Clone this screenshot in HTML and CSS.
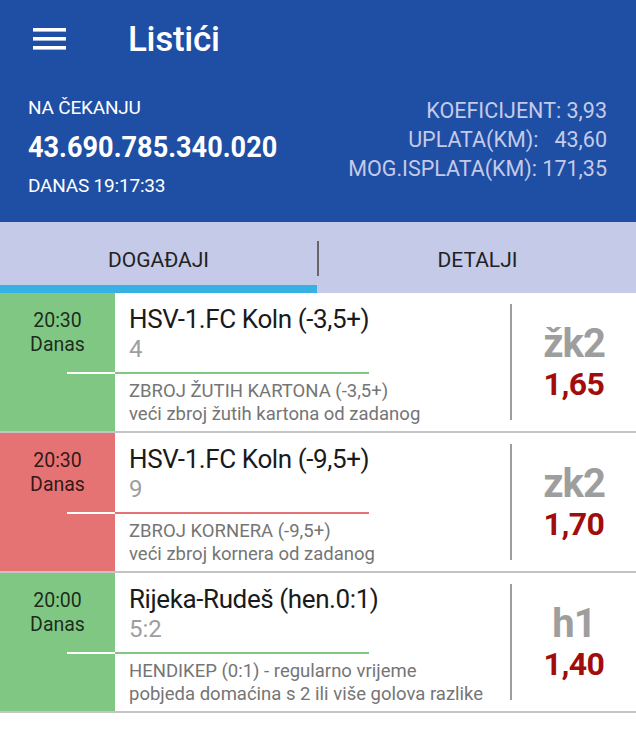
FILE: index.html
```html
<!DOCTYPE html>
<html lang="hr">
  <head>
    <meta charset="UTF-8" />
    <meta name="viewport" content="width=device-width, initial-scale=1.0" />
    <title>Listići</title>
    <link rel="stylesheet" href="styles.css">
  </head>
  <body>
    <header class="topbar">
      <div class="appbar">
        <svg class="menu-icon" width="33" height="22" viewBox="0 0 33 22">
          <rect x="0" y="0" width="33" height="3.6" fill="#fff" />
          <rect x="0" y="9" width="33" height="3.6" fill="#fff" />
          <rect x="0" y="18" width="33" height="3.6" fill="#fff" />
        </svg>
        <h1>Listići</h1>
      </div>
      <div class="summary">
        <div class="summary-left">
          <div class="status">NA ČEKANJU</div>
          <div class="ticket-no"><span>43.690.785.340.020</span></div>
          <div class="ticket-date">DANAS 19:17:33</div>
        </div>
        <div class="summary-right">
          <div class="summary-line">KOEFICIJENT: 3,93</div>
          <div class="summary-line">UPLATA(KM):   43,60</div>
          <div class="summary-line">MOG.ISPLATA(KM): 171,35</div>
        </div>
      </div>
    </header>

    <nav class="tabs">
      <div class="tab active">DOGAĐAJI</div>
      <span class="tab-divider"></span>
      <div class="tab">DETALJI</div>
    </nav>

    <ul class="events">
      <li class="event won">
        <div class="event-time">
          <div class="time-text">20:30<br />Danas</div>
          <span class="stub"></span>
        </div>
        <div class="event-info">
          <div class="event-head">
            <div class="event-title">HSV-1.FC Koln (-3,5+)</div>
            <div class="event-score">4</div>
          </div>
          <span class="rule"></span>
          <div class="event-desc">
            ZBROJ ŽUTIH KARTONA (-3,5+)<br />
            veći zbroj žutih kartona od zadanog
          </div>
        </div>
        <div class="event-odd">
          <div class="odd-code">žk2</div>
          <div class="odd-value">1,65</div>
        </div>
      </li>

      <li class="event lost">
        <div class="event-time">
          <div class="time-text">20:30<br />Danas</div>
          <span class="stub"></span>
        </div>
        <div class="event-info">
          <div class="event-head">
            <div class="event-title">HSV-1.FC Koln (-9,5+)</div>
            <div class="event-score">9</div>
          </div>
          <span class="rule"></span>
          <div class="event-desc">
            ZBROJ KORNERA (-9,5+)<br />
            veći zbroj kornera od zadanog
          </div>
        </div>
        <div class="event-odd">
          <div class="odd-code">zk2</div>
          <div class="odd-value">1,70</div>
        </div>
      </li>

      <li class="event won">
        <div class="event-time">
          <div class="time-text">20:00<br />Danas</div>
          <span class="stub"></span>
        </div>
        <div class="event-info">
          <div class="event-head">
            <div class="event-title">Rijeka-Rudeš (hen.0:1)</div>
            <div class="event-score">5:2</div>
          </div>
          <span class="rule"></span>
          <div class="event-desc">
            HENDIKEP (0:1) - regularno vrijeme<br />
            pobjeda domaćina s 2 ili više golova razlike
          </div>
        </div>
        <div class="event-odd">
          <div class="odd-code">h1</div>
          <div class="odd-value">1,40</div>
        </div>
      </li>
    </ul>
  </body>
</html>
```

FILE: styles.css
```css
body {
  font-family: Roboto, "Noto Sans", sans-serif;
  background-color: #fff;
  margin: 0;
  padding: 0;
}
.topbar {
  background-color: #1f4fa4;
  color: #fff;
}
.appbar {
  height: 78px;
  display: flex;
  align-items: center;
  padding-left: 33px;
}
.appbar h1 {
  margin: 0 0 0 62px;
  font-size: 35px;
  font-weight: 500;
  letter-spacing: -0.3px;
}
.summary {
  display: flex;
  justify-content: space-between;
  align-items: flex-start;
  padding: 18px 29px 24px 28px;
}
.status,
.ticket-date {
  font-size: 19px;
  line-height: 24px;
  letter-spacing: -0.2px;
}
.ticket-no {
  font-size: 29px;
  font-weight: 700;
  line-height: 36px;
  margin: 9px 0;
  white-space: nowrap;
}
.ticket-no span {
  display: inline-block;
  transform: scaleX(0.935);
  transform-origin: left center;
}
.summary-right {
  text-align: right;
  font-size: 21.5px;
  line-height: 29px;
  color: #c5cae9;
}
.summary-line {
  white-space: pre;
}
.tabs {
  display: flex;
  background-color: #c5cae9;
  height: 71px;
}
.tab {
  flex: 1;
  text-align: center;
  font-size: 21px;
  line-height: 25px;
  color: #222;
  padding-top: 26px;
  box-sizing: border-box;
  border-bottom: 8px solid transparent;
}
.tab.active {
  border-bottom-color: #36b1e3;
}
.tab-divider {
  width: 2px;
  height: 35px;
  margin-top: 19px;
  background-color: #666;
}
.events {
  list-style: none;
  margin: 0;
  padding: 0;
}
.event {
  display: grid;
  grid-template-columns: 115px 1fr 126px;
  height: 140px;
  box-sizing: border-box;
  border-bottom: 2px solid #c4c4c4;
}
.event-time {
  display: flex;
  flex-direction: column;
}
.won .event-time {
  background-color: #81c784;
}
.lost .event-time {
  background-color: #e57373;
}
.time-text {
  height: 79px;
  box-sizing: border-box;
  padding-top: 16px;
  text-align: center;
  font-size: 19.5px;
  line-height: 24px;
  color: rgba(0, 0, 0, 0.8);
}
.stub {
  align-self: flex-end;
  width: 48px;
  height: 2px;
  background-color: #fff;
}
.event-info {
  padding-left: 14px;
}
.event-head {
  height: 79px;
  box-sizing: border-box;
  padding-top: 11px;
}
.event-title {
  font-size: 26px;
  line-height: 30px;
  letter-spacing: -0.4px;
  color: #1a1a1a;
  white-space: nowrap;
}
.event-score {
  font-size: 24px;
  line-height: 28px;
  color: #9e9e9e;
  margin-top: 1px;
}
.rule {
  display: block;
  width: 254px;
  height: 2px;
  margin-left: -14px;
}
.won .rule {
  background-color: #81c784;
}
.lost .rule {
  background-color: #e57373;
}
.event-desc {
  padding-top: 6px;
  font-size: 18.5px;
  line-height: 23px;
  color: #757575;
  white-space: nowrap;
}
.event-odd {
  margin: 11px 0 11px;
  border-left: 2px solid #9e9e9e;
  display: flex;
  flex-direction: column;
  justify-content: center;
  align-items: center;
  font-weight: 700;
}
.odd-code {
  font-size: 40px;
  line-height: 40px;
  letter-spacing: -1px;
  color: #9e9e9e;
}
.odd-value {
  font-size: 32px;
  line-height: 34px;
  margin-top: 3px;
  letter-spacing: -0.5px;
  color: #a00d0d;
}
```
